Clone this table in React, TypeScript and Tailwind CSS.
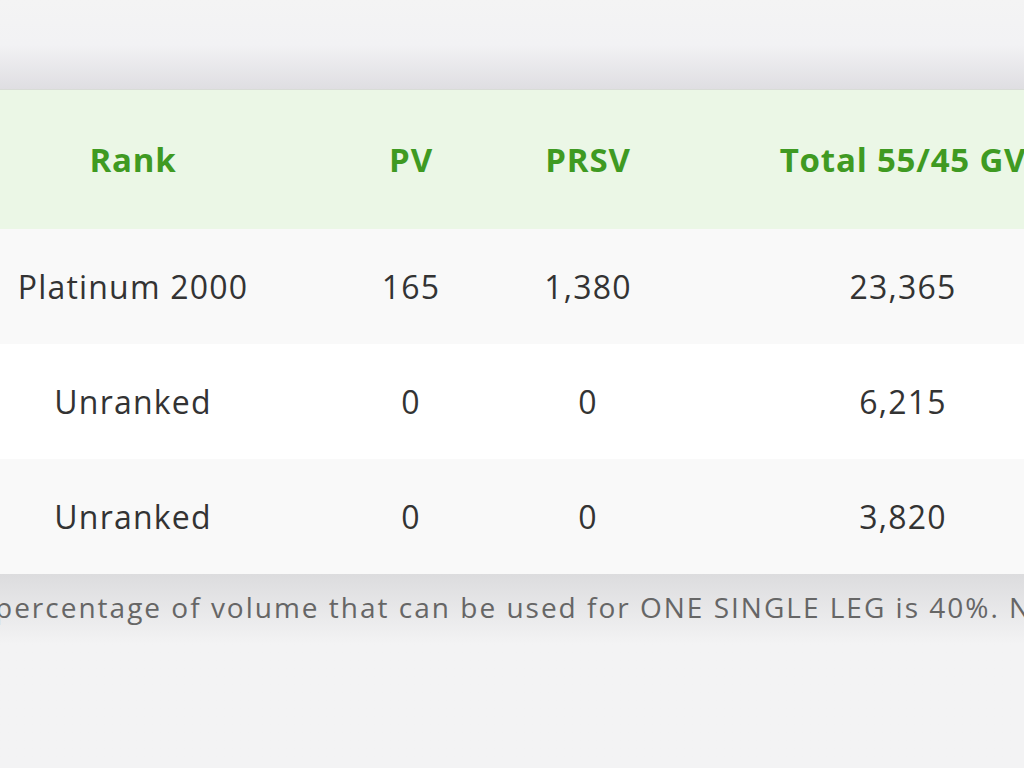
import React from "react";

const rows = [
  { rank: "Platinum 2000", pv: "165", prsv: "1,380", total: "23,365", bg: "bg-[#f9f9f9]" },
  { rank: "Unranked", pv: "0", prsv: "0", total: "6,215", bg: "bg-white" },
  { rank: "Unranked", pv: "0", prsv: "0", total: "3,820", bg: "bg-[#f9f9f9]" },
];

const cell = "flex items-center justify-center whitespace-nowrap";

export default function App() {
  return (
    <div
      className="w-[1024px] h-[768px] overflow-hidden bg-[#f3f3f4] flex flex-col"
      style={{ fontFamily: "'Open Sans', 'Noto Sans', sans-serif" }}
    >
      <div className="h-[90px] shrink-0 bg-gradient-to-b from-[#f4f4f4] via-[#f2f2f4] to-[#dfdee2] border-b border-[#d8dcd6]" />
      <div className="ml-[-60px] w-[1186px] shrink-0">
        <div className="grid grid-cols-[386px_170px_184px_446px] h-[139px] bg-[#ebf7e6] text-[#3f9a22] font-bold text-[33px] tracking-[0.8px]">
          <div className={cell}>Rank</div>
          <div className={cell}>PV</div>
          <div className={cell}>PRSV</div>
          <div className={cell}>Total 55/45 GV</div>
        </div>
        {rows.map((r, i) => (
          <div
            key={i}
            className={`grid grid-cols-[386px_170px_184px_446px] h-[115px] ${r.bg} text-[#333333] text-[32px] tracking-[1.2px]`}
          >
            <div className={cell}>{r.rank}</div>
            <div className={cell}>{r.pv}</div>
            <div className={cell}>{r.prsv}</div>
            <div className={cell}>{r.total}</div>
          </div>
        ))}
      </div>
      <div className="flex-1 bg-gradient-to-b from-[#dcdcde] to-[#f3f3f4] to-[70px] relative overflow-hidden">
        <div className="absolute left-[-5px] top-[12px] whitespace-nowrap text-[28px] tracking-[2px] text-[#666666]">
          percentage of volume that can be used for ONE SINGLE LEG is 40%. No
        </div>
      </div>
    </div>
  );
}
